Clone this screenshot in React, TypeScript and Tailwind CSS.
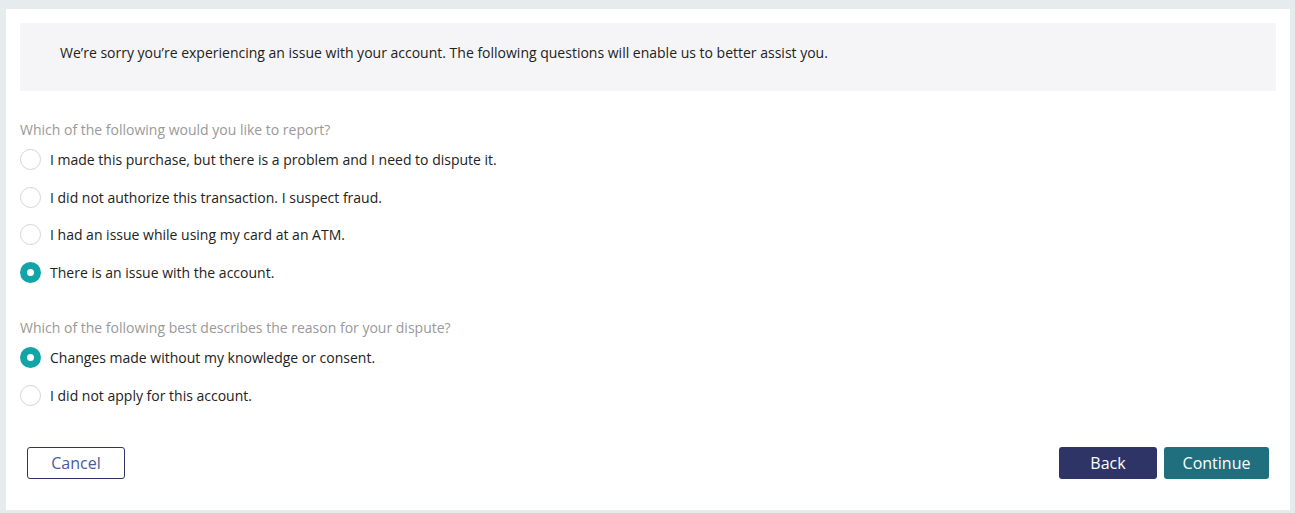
import { useState } from 'react';

const reportOptions = [
    'I made this purchase, but there is a problem and I need to dispute it.',
    'I did not authorize this transaction. I suspect fraud.',
    'I had an issue while using my card at an ATM.',
    'There is an issue with the account.',
];

const reasonOptions = [
    'Changes made without my knowledge or consent.',
    'I did not apply for this account.',
];

function Radio({ label, checked, onSelect }: { label: string; checked: boolean; onSelect: () => void }) {
    return (
        <label className="flex items-center h-[37.5px] cursor-pointer" onClick={onSelect}>
            {checked ? (
                <span className="w-[21px] h-[21px] rounded-full bg-[#12a4a6] flex items-center justify-center shrink-0">
                    <span className="w-[7px] h-[7px] rounded-full bg-white" />
                </span>
            ) : (
                <span className="w-[21px] h-[21px] rounded-full border border-[#d2d5d8] bg-white shrink-0" />
            )}
            <span className="ml-[9px] text-[14px] text-[#222]">{label}</span>
        </label>
    );
}

export default function App() {
    const [report, setReport] = useState(3);
    const [reason, setReason] = useState(0);

    return (
        <div className="bg-[#e6ebed] pt-[9px] pl-[6px] pr-[5px] pb-[3px] min-h-[513px]" style={{ fontFamily: '"Open Sans", sans-serif' }}>
            <div className="bg-white h-[501px] px-[14px] pt-[14px]">
                <div className="bg-[#f5f5f7] h-[68px] pt-[20px] pl-[40px] text-[14px] leading-[20px] text-[#222]">
                    We’re sorry you’re experiencing an issue with your account. The following questions will enable us to better assist you.
                </div>

                <div className="mt-[28px] text-[14px] text-[#999]">Which of the following would you like to report?</div>
                <div className="mt-[1px]">
                    {reportOptions.map((opt, i) => (
                        <Radio key={opt} label={opt} checked={report === i} onSelect={() => setReport(i)} />
                    ))}
                </div>

                <div className="mt-[26px] text-[14px] text-[#999]">Which of the following best describes the reason for your dispute?</div>
                <div className="mt-[1px]">
                    {reasonOptions.map((opt, i) => (
                        <Radio key={opt} label={opt} checked={reason === i} onSelect={() => setReason(i)} />
                    ))}
                </div>

                <div className="mt-[33px] flex items-center justify-between pl-[7px] pr-[7px]">
                    <button className="w-[98px] h-[32px] rounded-[3px] border border-[#2d3566] text-[16px] text-[#4b5a99] bg-white">
                        Cancel
                    </button>
                    <div className="flex gap-[7px]">
                        <button className="w-[98px] h-[32px] rounded-[3px] bg-[#2e3566] text-[16px] text-white">Back</button>
                        <button className="w-[105px] h-[32px] rounded-[3px] bg-[#206f7f] text-[16px] text-white">Continue</button>
                    </div>
                </div>
            </div>
        </div>
    );
}
